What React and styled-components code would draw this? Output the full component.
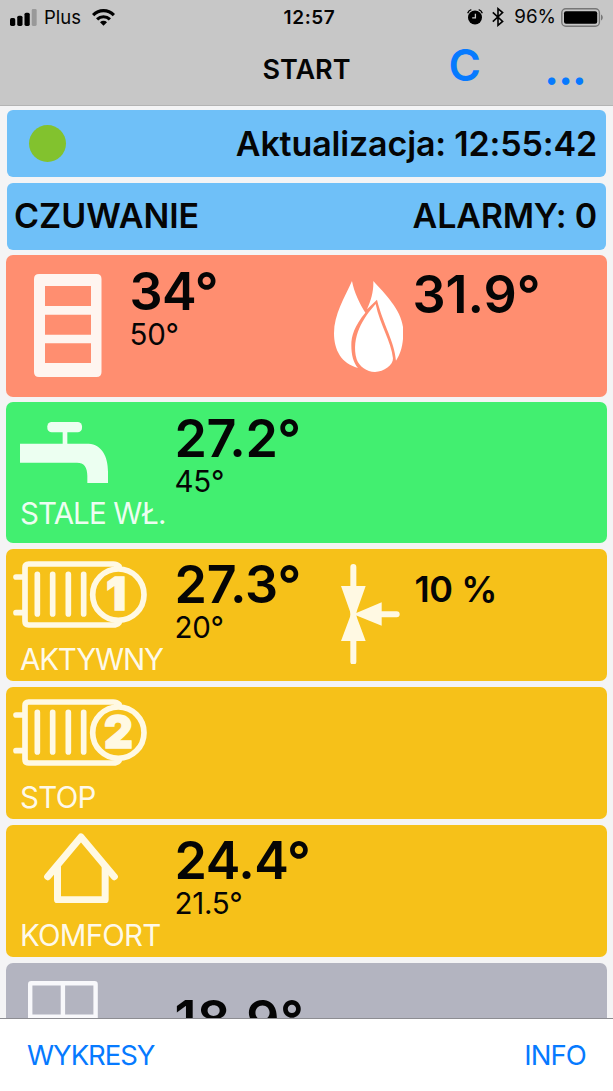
import React from 'react';
import styled, { createGlobalStyle } from 'styled-components';

const GlobalStyle = createGlobalStyle`
  * { box-sizing: border-box; }
  body {
    margin: 0;
    background: #f4f4f5;
    font-family: Inter, "Liberation Sans", sans-serif;
    color: #050505;
  }
`;

const Screen = styled.div`
  display: flex;
  flex-direction: column;
  height: 1091px;
  overflow: hidden;
`;

const Header = styled.header`
  flex: none;
  height: 106px;
  background: #c7c7c7;
  border-bottom: 1px solid #b4b4b4;
`;

const StatusBar = styled.div`
  display: grid;
  grid-template-columns: 1fr auto 1fr;
  align-items: center;
  height: 34px;
  padding: 0 10px;
`;

const StatusGroup = styled.div`
  display: flex;
  align-items: center;
  justify-content: ${p => p.$end ? 'flex-end' : 'flex-start'};
`;

const Text = styled.span`
  display: block;
  white-space: pre;
  font-size: ${p => p.$size}px;
  line-height: ${p => p.$line || p.$size}px;
  font-weight: ${p => p.$weight || 400};
  letter-spacing: ${p => p.$track || 0}px;
`;

const Carrier = styled(Text)`margin: 0 11px 0 7px;`;
const Clock = styled(Text)`padding-left: 6px;`;
const Percent = styled(Text)`margin: 0 5px 0 10px;`;

const TitleBar = styled.div`
  display: grid;
  grid-template-columns: 1fr auto 1fr;
  height: 71px;
`;

const Title = styled(Text)`grid-column: 2;`;

const Actions = styled.div`
  display: flex;
  justify-content: space-between;
  align-items: flex-start;
  padding: 0 27px 0 98px;
`;

const LinkButton = styled.button`
  border: 0;
  padding: 0;
  background: none;
  color: #067aff;
  font-family: inherit;
  font-size: ${p => p.$size}px;
  line-height: ${p => p.$line}px;
  font-weight: ${p => p.$weight || 400};
  letter-spacing: ${p => p.$track || 0}px;
`;

const List = styled.main`
  flex: 1;
  min-height: 0;
  overflow: hidden;
  display: flex;
  flex-direction: column;
  gap: 5.5px;
  padding: 4px 6px 0;
`;

const InfoRow = styled.section`
  flex: none;
  display: flex;
  align-items: center;
  justify-content: space-between;
  height: 67px;
  margin: 0 1px;
  padding: ${p => p.$top || 0}px 9px 0 ${p => p.$inset}px;
  border-radius: 6px;
  background: #6fc0f8;
`;

const Dot = styled.div`
  width: 37px;
  height: 37px;
  margin-bottom: 2px;
  border-radius: 50%;
  background: #82c22e;
`;

const Card = styled.section`
  flex: none;
  display: grid;
  grid-template-columns: ${p => p.$narrow ? 123.5 : 168.5}px ${p => p.$narrow ? 204 : 158.5}px 79px 1fr;
  height: ${p => p.$height}px;
  border-radius: 7px;
  background: ${p => p.$color};
`;

const Cell = styled.div`
  display: flex;
  flex-direction: column;
  align-items: flex-start;
  padding-top: ${p => p.$top || 0}px;
  padding-left: ${p => p.$left || 0}px;
`;

const IconBox = styled(Cell)`
  height: 98.5px;
  svg { display: block; flex: none; }
`;

const ModeLabel = styled(Text)`
  padding-left: 14px;
  color: rgba(255, 255, 255, 0.92);
`;

const Toolbar = styled.footer`
  flex: none;
  display: flex;
  justify-content: space-between;
  align-items: flex-start;
  height: 73px;
  padding: 18px 27px 0;
  border-top: 1px solid #8d8d92;
  background: #fff;
`;

const SignalIcon = () => (
  <svg width="27" height="17" viewBox="29 24 82 51">
    <rect x="29" y="51" width="16" height="24" rx="5" />
    <rect x="51" y="44" width="16" height="31" rx="5" />
    <rect x="73" y="35" width="16" height="40" rx="5" />
    <rect x="95" y="24" width="15" height="51" rx="4" fill="#999" />
  </svg>
);

const WifiIcon = () => (
  <svg width="23" height="17" viewBox="0 0 23 17" fill="none" stroke="#000" strokeWidth="3.2">
    <path d="M1.1 6.1C7 .2 16 .2 21.9 6.1" />
    <path d="M5.1 10.3C8.7 6.9 14.3 6.9 17.9 10.3" />
    <path d="M11.5 16.7L8 13.2C10 11.4 13 11.4 15 13.2Z" fill="#000" stroke="none" />
  </svg>
);

const AlarmIcon = () => (
  <svg width="16" height="16" viewBox="0 0 16 16">
    <circle cx="8" cy="8.5" r="7" />
    <path d="M8.4 4.8V8.9H5.2" fill="none" stroke="#c7c7c7" strokeWidth="1.3" />
    <path d="M.7 4.2C1.3 2.4 2.5 1.2 4.3.7M15.3 4.2C14.7 2.4 13.5 1.2 11.7.7" fill="none" stroke="#000" strokeWidth="1.4" />
  </svg>
);

const BluetoothIcon = () => (
  <svg width="12" height="20" viewBox="0 0 12 20" fill="none" stroke="#000" strokeWidth="1.6">
    <path d="M.8 5.4L10.6 14.4L6 18.3V1.7L10.6 5.6L.8 14.6" />
  </svg>
);

const BatteryIcon = () => (
  <svg width="42" height="19" viewBox="0 0 42 19">
    <rect x=".8" y=".8" width="37.6" height="17.4" rx="4" fill="none" stroke="#777" strokeWidth="1.4" />
    <rect x="3" y="3.2" width="33.2" height="12.6" rx="2" />
    <path d="M40 6.5C42.3 7.7 42.3 11.3 40 12.5Z" fill="#777" />
  </svg>
);

const BoilerIcon = () => (
  <svg width="67.5" height="103" viewBox="0 0 67.5 103" fill="#fff5f0">
    <path
      fillRule="evenodd"
      d="M5 0H62.5Q67.5 0 67.5 5V98Q67.5 103 62.5 103H5Q0 103 0 98V5Q0 0 5 0Z
         M11 12V32H57V12Z M11 40.7V60.7H57V40.7Z M11 69.3V89H57V69.3Z"
    />
  </svg>
);

const FlameIcon = () => (
  <svg width="69.3" height="91" viewBox="84 93 208 273" fill="#fff">
    <path d="M138 93C144 125 160 160 178 188C145 228 136 258 136 285C136 315 142 338 156 354C106 341 84 300 84 250C84 193 116 143 138 93Z" />
    <path d="M202 93C240 135 292 185 292 245C292 285 284 310 270 332C266 275 232 225 213 149L183 178C196 148 203 125 202 93Z" />
    <path d="M209 162C222 225 256 275 261 325C262 345 234 366 207 366C182 366 160 350 152 328C134 262 172 203 209 162Z" />
  </svg>
);

const TapIcon = () => (
  <svg width="88" height="61.7" viewBox="59 66 264 185" fill="#ecfff1">
    <rect x="141" y="66" width="104" height="31" rx="13" />
    <path d="M187 96H201V131H265C304 134 323 168 323 215V251H261V228C261 201 251 188 230 188H59V131H187Z" />
  </svg>
);

const RadiatorIcon = ({ number }) => (
  <svg width="134" height="67" viewBox="39 48 402 201" fill="none" stroke="#fff9e3" strokeWidth="17" strokeLinecap="round">
    <path d="M48 96H70M48 203H70" />
    <path d="M357 64Q350 57 340 57H86Q75 57 75 68V229Q75 240 86 240H340Q350 240 357 233" />
    <path d="M112 88V207M158 88V207M205 88V207M251 88V207" />
    <circle cx="355" cy="149" r="77" />
    <text
      x={number === '1' ? 348 : 355} y="196" textAnchor="middle"
      fill="#fff9e3" strokeWidth="4"
      fontFamily="Inter" fontSize="134" fontWeight="900"
    >
      {number}
    </text>
  </svg>
);

const ValveIcon = () => (
  <svg width="58.7" height="100.7" viewBox="106 56 176 302" fill="#fff9e3">
    <path d="M106 122H180L150 207L180 287H106L136 207Z" />
    <path d="M228 171V241L143 207Z" />
    <path d="M143 65V349M228 207H273" stroke="#fff9e3" strokeWidth="18" strokeLinecap="round" />
  </svg>
);

const HouseIcon = () => (
  <svg width="74" height="70.7" viewBox="132 38 222 212" fill="none" stroke="#fff9e3" strokeWidth="21" strokeLinecap="round" strokeLinejoin="round">
    <path d="M143 169L243 50L343 169" />
    <path d="M172.5 140V238.5H315.5V140" />
  </svg>
);

const WindowIcon = () => (
  <svg width="70" height="70" viewBox="0 0 70 70" fill="none" stroke="#f8f8fb" strokeWidth="4.4">
    <rect x="2.2" y="2.2" width="65.4" height="65.6" rx="1" />
    <path d="M34.9 2V68M2 35.8H68" />
  </svg>
);

const Reading = ({ value, target, top = 10.5, track = 0 }) => (
  <Cell $top={top}>
    <Text $size={52} $weight={600} $track={track}>{value}</Text>
    {target && <Text $size={29.5} $line={33} $track={-0.3}>{target}</Text>}
  </Cell>
);

const cards = [
  { mode: 'STALE WŁ.', labelTrack: -0.9, height: 141, color: '#42ef70', icon: <TapIcon />, top: 19.5, left: 13.7, value: '27.2°', track: -0.5, target: '45°' },
  { mode: 'AKTYWNY', labelTrack: -1.2, height: 132.5, color: '#f6c119', icon: <RadiatorIcon number="1" />, top: 12.5, left: 7, value: '27.3°', track: -0.2, target: '20°', valve: '10 %' },
  { mode: 'STOP', labelTrack: -0.7, height: 132.5, color: '#f6c119', icon: <RadiatorIcon number="2" />, top: 12.5, left: 7 },
  { mode: 'KOMFORT', labelTrack: -0.8, height: 132.5, color: '#f6c119', icon: <HouseIcon />, top: 8, left: 38, value: '24.4°', track: -0.4, target: '21.5°' },
  { height: 141, color: '#b3b4c0', icon: <WindowIcon />, top: 18.5, left: 22, value: '18.9°', track: 0.5, valueTop: 31 },
];

const App = () => (
  <Screen>
    <GlobalStyle />
    <Header>
      <StatusBar>
        <StatusGroup>
          <SignalIcon />
          <Carrier $size={18.5}>Plus</Carrier>
          <WifiIcon />
        </StatusGroup>
        <Clock $size={19} $weight={600} $track={0.6}>12:57</Clock>
        <StatusGroup $end>
          <AlarmIcon />
          <Cell $left={9}><BluetoothIcon /></Cell>
          <Percent $size={18.8}>96%</Percent>
          <BatteryIcon />
        </StatusGroup>
      </StatusBar>
      <TitleBar>
        <Title $size={27} $line={71} $weight={600}>START</Title>
        <Actions>
          <LinkButton $size={44} $line={63} $weight={600}>C</LinkButton>
          <LinkButton $size={44} $line={71} $weight={700} $track={-0.8}>...</LinkButton>
        </Actions>
      </TitleBar>
    </Header>

    <List>
      <InfoRow $top={1} $inset={22}>
        <Dot />
        <Text $size={34} $weight={600} $track={-0.15}>Aktualizacja: 12:55:42</Text>
      </InfoRow>
      <InfoRow $inset={7}>
        <Text $size={34} $weight={600}>CZUWANIE</Text>
        <Text $size={34} $weight={600} $track={-0.2}>ALARMY: 0</Text>
      </InfoRow>

      <Card $narrow $height={141.5} $color="#ff8e70">
        <IconBox $top={19} $left={28}><BoilerIcon /></IconBox>
        <Reading value="34°" target="50°" top={11} track={-0.5} />
        <IconBox $top={26}><FlameIcon /></IconBox>
        <Reading value="31.9°" top={14} />
      </Card>

      {cards.map((card, i) => (
        <Card key={i} $height={card.height} $color={card.color}>
          <div>
            <IconBox $top={card.top} $left={card.left}>{card.icon}</IconBox>
            {card.mode && (
              <ModeLabel $size={29.5} $line={24} $track={card.labelTrack}>{card.mode}</ModeLabel>
            )}
          </div>
          {card.value && (
            <Reading value={card.value} target={card.target} top={card.valueTop} track={card.track} />
          )}
          {card.valve && (
            <React.Fragment>
              <IconBox $top={15} $left={8}><ValveIcon /></IconBox>
              <Cell $top={22.5} $left={2.5}>
                <Text $size={36} $weight={600} $track={-0.4}>{card.valve}</Text>
              </Cell>
            </React.Fragment>
          )}
        </Card>
      ))}
    </List>

    <Toolbar>
      <LinkButton $size={27.5} $line={36} $track={-1.05}>WYKRESY</LinkButton>
      <LinkButton $size={27.5} $line={36} $track={-0.9}>INFO</LinkButton>
    </Toolbar>
  </Screen>
);

export default App;
